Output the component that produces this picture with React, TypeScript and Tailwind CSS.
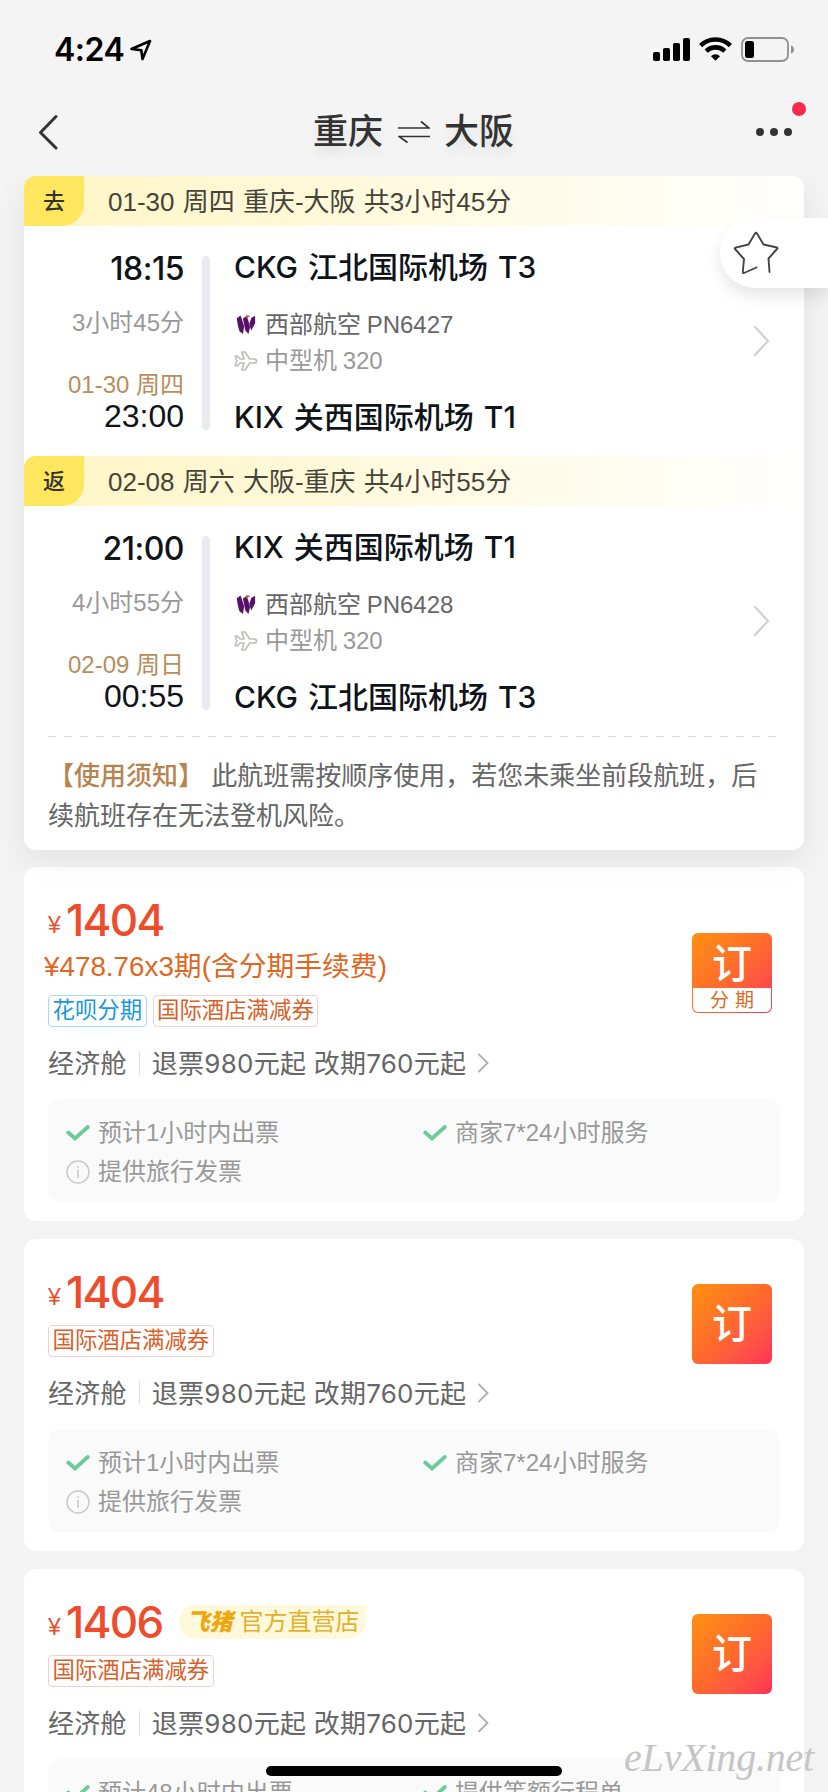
import React from 'react';

interface Leg {
  tag: string;
  summary: string;
  depart: string;
  duration: string;
  arriveDate: string;
  arrive: string;
  from: string;
  to: string;
  flightNo: string;
}

interface Offer {
  price: string;
  installment?: string;
  official?: boolean;
  services: string[];
}

const legs: Leg[] = [
  {
    tag: '去',
    summary: '01-30 周四 重庆-大阪 共3小时45分',
    depart: '18:15',
    duration: '3小时45分',
    arriveDate: '01-30 周四',
    arrive: '23:00',
    from: 'CKG 江北国际机场 T3',
    to: 'KIX 关西国际机场 T1',
    flightNo: '西部航空 PN6427',
  },
  {
    tag: '返',
    summary: '02-08 周六 大阪-重庆 共4小时55分',
    depart: '21:00',
    duration: '4小时55分',
    arriveDate: '02-09 周日',
    arrive: '00:55',
    from: 'KIX 关西国际机场 T1',
    to: 'CKG 江北国际机场 T3',
    flightNo: '西部航空 PN6428',
  },
];

const offers: Offer[] = [
  {
    price: '1404',
    installment: '¥478.76x3期(含分期手续费)',
    services: ['预计1小时内出票', '商家7*24小时服务', '提供旅行发票'],
  },
  {
    price: '1404',
    services: ['预计1小时内出票', '商家7*24小时服务', '提供旅行发票'],
  },
  {
    price: '1406',
    official: true,
    services: ['预计48小时内出票', '提供等额行程单'],
  },
];

const StatusBar = () => (
  <div className="flex h-[88px] items-start justify-between pr-[33px] pl-[54px] text-black">
    <div className="flex items-center pt-[30px]">
      <span className="font-['Inter','Liberation_Sans',sans-serif] text-[32px] leading-[40px] font-semibold tracking-[-0.5px]">
        4:24
      </span>
      <svg className="ml-1.5 size-[22px]" viewBox="0 0 22 22" fill="none">
        <path
          d="M1.5 10 20 2 12.5 20 11.3 11.2Z"
          stroke="currentColor"
          strokeWidth="2.6"
          strokeLinejoin="round"
        />
      </svg>
    </div>
    <div className="flex items-start pt-9">
      <svg className="mt-0.5 h-[23px] w-[37px]" viewBox="0 0 37 23">
        <rect x="0" y="14" width="7" height="9" rx="1.8" />
        <rect x="10" y="10" width="7" height="13" rx="1.8" />
        <rect x="20" y="5" width="7" height="18" rx="1.8" />
        <rect x="30" y="0" width="7" height="23" rx="1.8" />
      </svg>
      <svg
        className="mt-px ml-[9px] h-[24px] w-[33px]"
        viewBox="0 0 33 24"
        fill="none"
        stroke="currentColor"
        strokeWidth="4.6"
      >
        <path d="M1.6 8.6a21.3 21.3 0 0 1 29.8 0" />
        <path d="M7.2 14.2a13.3 13.3 0 0 1 18.6 0" />
        <path
          d="M12 19.2a6.4 6.4 0 0 1 9 0L16.5 23.8Z"
          fill="currentColor"
          stroke="none"
        />
      </svg>
      <svg className="mt-px ml-[9px] h-[25px] w-[54px]" viewBox="0 0 54 25">
        <rect
          x="1"
          y="1"
          width="46"
          height="23"
          rx="6"
          fill="none"
          stroke="#919191"
          strokeWidth="1.8"
        />
        <rect x="4" y="4" width="9" height="17" rx="2.5" />
        <path d="M50 8.500c4 1 4 7 0 8Z" fill="#919191" />
      </svg>
    </div>
  </div>
);

const NavBar = () => (
  <header className="relative flex h-[88px] items-center justify-between pr-9 pl-[38px] text-[#333] [text-shadow:0_8px_10px_rgba(0,0,0,0.08)]">
    <svg className="h-9 w-[21px]" viewBox="0 0 21 36" fill="none">
      <path
        d="M18 2.5 2.5 18.500 18 34"
        stroke="currentColor"
        strokeWidth="3"
        strokeLinecap="round"
        strokeLinejoin="round"
      />
    </svg>
    <h1 className="flex items-center pl-[12px] text-[35px] leading-[50px] font-medium">
      重庆
      <svg
        className="mr-[14px] ml-[15px] h-[24px] w-8"
        viewBox="0 0 32 24"
        fill="none"
        stroke="currentColor"
        strokeWidth="1.7"
      >
        <path d="M0 8h31L23 1.5" />
        <path d="M32 16.500H1l8.500 6" />
      </svg>
      大阪
    </h1>
    <div className="flex gap-1.5">
      <i className="size-2 rounded-full bg-[#333]" />
      <i className="size-2 rounded-full bg-[#333]" />
      <i className="size-2 rounded-full bg-[#333]" />
    </div>
    <i className="absolute top-[14px] right-[22px] size-[14px] rounded-full bg-[#fa2a4f]" />
  </header>
);

const AirlineLogo = () => (
  <svg className="ml-[2px] h-[20px] w-[20px]" viewBox="0 0 20 20">
    <path
      d="M0.800 3.200 4.500.6 6 4.500 8.200 11.500 6.800 19 3.300 16 1.600 9Z"
      fill="#56106a"
    />
    <path
      d="M7 3.400 10.200 1.200 12 4.500 14 12 12.500 19 9.400 15.600 8 9Z"
      fill="#56106a"
    />
    <path d="M15.300 3 19 .8 19.200 8 15.200 15.500 13.300 9Z" fill="#56106a" />
    <path d="M9.400 1.600c1.500-2 3.400-1.800 4.800.2-1.600-.2-2.400.4-3 1.600Z" fill="#e0453a" />
  </svg>
);

const PlaneIcon = () => (
  <svg
    className="h-[20px] w-[24px]"
    viewBox="0 0 24 20"
    fill="none"
    stroke="#bcc0ba"
    strokeWidth="1.7"
    strokeLinejoin="round"
  >
    <path d="M1.300 5.200h2.200L6 8h4L7.800 1H11l4.800 7h4.700c2.900.4 2.900 3.600 0 4h-4.700L11 19H7.800L10 12H6l-2.500 2.800H1.300L2.800 10Z" />
  </svg>
);

const FlightLeg = ({ leg }: { leg: Leg }) => (
  <section>
    <div className="flex h-[50px] items-center rounded-tl-[12px] rounded-tr-[12px] bg-linear-to-r from-[#fff5c4] via-[#fffbe6] via-60% to-white">
      <span className="flex h-[50px] w-[60px] items-center justify-center rounded-tl-[12px] rounded-br-[22px] bg-[#fee75e] pt-px text-[22px] font-medium text-[#333]">
        {leg.tag}
      </span>
      <span className="ml-6 pt-[2px] text-[26px] [word-spacing:1px] text-[#464439]">
        {leg.summary}
      </span>
    </div>
    <div className="flex h-[230px] items-center pt-[4px]">
      <div className="flex h-[174px] w-[160px] flex-col items-end *:shrink-0">
        <span className="mt-[-7px] font-['Inter','Liberation_Sans',sans-serif] text-[32px] leading-[40px] font-medium tracking-[-0.5px] text-[#0f131a]">
          {leg.depart}
        </span>
        <span className="mt-[19px] text-2xl leading-[30px] text-[#999]">
          {leg.duration}
        </span>
        <span className="mt-[32px] text-2xl leading-[30px] text-[#b98d5c]">
          {leg.arriveDate}
        </span>
        <span className="text-[32px] leading-[32px] text-[#0f131a]">
          {leg.arrive}
        </span>
      </div>
      <div className="ml-[18px] h-[174px] w-2 rounded-full bg-[#e9eaf0]" />
      <div className="ml-6 flex h-[174px] flex-1 flex-col *:shrink-0">
        <span className="mt-[-9px] font-['Inter','Noto_Sans_CJK_SC',sans-serif] text-[30px] leading-[40px] font-medium [word-spacing:2px] text-[#0f131a]">
          {leg.from}
        </span>
        <div className="mt-[20px] flex h-9 items-center text-2xl [word-spacing:-1px] text-[#666]">
          <span className="w-[31px]">
            <AirlineLogo />
          </span>
          {leg.flightNo}
        </div>
        <div className="flex h-9 items-center text-2xl [word-spacing:-1px] text-[#999]">
          <span className="w-[31px]">
            <PlaneIcon />
          </span>
          中型机 320
        </div>
        <span className="mt-[18px] font-['Inter','Noto_Sans_CJK_SC',sans-serif] text-[30px] leading-[40px] font-medium [word-spacing:2px] text-[#0f131a]">
          {leg.to}
        </span>
      </div>
      <svg
        className="mt-[-4px] mr-[34px] h-8 w-[17px]"
        viewBox="0 0 17 32"
        fill="none"
      >
        <path
          d="M2 2 15 16 2 30"
          stroke="#d0d0d0"
          strokeWidth="2.2"
          strokeLinecap="round"
        />
      </svg>
    </div>
  </section>
);

const CheckIcon = () => (
  <svg className="h-4 w-[24px]" viewBox="0 0 24 16" fill="none">
    <path
      d="M2.2 7.500 9 13.500 21.800 2"
      stroke="#6bcb9a"
      strokeWidth="3.8"
      strokeLinecap="round"
    />
  </svg>
);

const InfoIcon = () => (
  <svg className="size-6" viewBox="0 0 24 24" fill="none" stroke="#c9cacb">
    <circle cx="12" cy="12" r="11" strokeWidth="1.5" />
    <path d="M12 10v8" strokeWidth="1.6" />
    <circle cx="12" cy="7" r="1" fill="#c9cacb" stroke="none" />
  </svg>
);

const BookButton = ({ installment }: { installment: boolean }) => (
  <button
    type="button"
    className="flex size-20 flex-col overflow-hidden rounded-[6px] bg-linear-135 from-[#ff900a] via-[#ff6a2b] to-[#ff3056]"
  >
    <span
      className={`flex w-full flex-1 items-center justify-center text-[40px] leading-none font-medium text-white ${
        installment ? 'pt-1.5' : ''
      }`}
    >
      订
    </span>
    {installment && (
      <span className="mx-px mb-px flex h-6 w-[78px] items-center justify-center gap-[6px] rounded-b-[5px] bg-white pt-px text-[19px] leading-none text-[#e0671f]">
        <b className="font-normal">分</b>
        <b className="font-normal">期</b>
      </span>
    )}
  </button>
);

const OfferCard = ({ offer }: { offer: Offer }) => (
  <article className="rounded-[12px] bg-white px-6 pt-[28px] pb-[19px]">
    <div className="flex justify-between">
      <div>
        <div className="flex h-[50px] items-center">
          <div className="flex items-baseline font-['Inter','Liberation_Sans',sans-serif] text-[#ee4d2d]">
            <span className="w-[14px] -translate-y-[3px] font-['Liberation_Sans',sans-serif] text-[23px]">
              ¥
            </span>
            <span className="ml-[4px] text-[44px] leading-[50px] font-medium tracking-[-1.7px]">
              {offer.price}
            </span>
          </div>
          {offer.official && (
            <div className="ml-[17px] flex h-[34px] items-center rounded-l-[16px] rounded-br-[18px] bg-[#fff9dc] px-[7px] text-2xl text-[#e3b02e]">
              <em className="mr-[7px] text-[23px] font-black text-[#efa50c]">
                飞猪
              </em>
              官方直营店
            </div>
          )}
        </div>
        {offer.installment && (
          <p className="mt-[2px] ml-[-4px] h-10 text-[27.8px] leading-10 text-[#e0671f]">
            {offer.installment}
          </p>
        )}
        <div className="mt-2 flex h-8 gap-1.5 text-[22.4px] leading-[29px]">
          {offer.installment && (
            <span className="rounded-[4px] border border-[#a9d8f5] px-[3.5px] text-[#1a97dc]">
              花呗分期
            </span>
          )}
          <span className="rounded-[4px] border border-[#f3cfd2] px-[3.5px] text-[#d9602a]">
            国际酒店满减券
          </span>
        </div>
      </div>
      <div
        className={
          offer.installment ? 'mt-[38px] mr-2' : 'mt-[17px] mr-2 mb-[-10px]'
        }
      >
        <BookButton installment={!!offer.installment} />
      </div>
    </div>
    <div className="mt-4 flex h-10 items-center font-['Inter','Noto_Sans_CJK_SC',sans-serif] text-[26px] tracking-[0.25px] text-[#666]">
      经济舱
      <i className="mx-[12px] h-6 w-px bg-[#ddd]" />
      退票980元起 改期760元起
      <svg className="ml-[11px] h-5 w-[12px]" viewBox="0 0 12 20" fill="none">
        <path d="M1.5 1 10.500 10l-9 9" stroke="#b0b0b0" strokeWidth="1.9" />
      </svg>
    </div>
    <ul className="mt-4 grid h-[103px] grid-cols-[357px_1fr] content-start rounded-[12px] bg-[#fafafa] pt-[14px] pl-[18px] text-2xl text-[#999]">
      {offer.services.map((service, i) => (
        <li key={service} className="flex h-[39px] items-center gap-2">
          {i < 2 ? <CheckIcon /> : <InfoIcon />}
          {service}
        </li>
      ))}
    </ul>
  </article>
);

const App: React.FC = () => {
  return (
    <div
      lang="zh-CN"
      className="relative h-[1792px] w-[828px] overflow-hidden bg-[#f3f3f3] font-['Liberation_Sans','Noto_Sans_CJK_SC',sans-serif]"
    >
      <div className="relative z-20 bg-[#f4f4f4]">
        <StatusBar />
        <NavBar />
      </div>

      <main className="px-6">
        <div className="relative z-10 h-[674px] rounded-[12px] bg-white shadow-[0_10px_30px_rgba(0,0,0,0.07)]">
          {legs.map((leg) => (
            <FlightLeg key={leg.flightNo} leg={leg} />
          ))}
          <svg className="mx-6 h-[2px] w-[732px]" viewBox="0 0 732 2">
            <path
              d="M0 .5h732"
              stroke="#dadada"
              strokeWidth="1"
              strokeDasharray="8 8"
            />
          </svg>
          <p className="mt-[18px] px-6 text-[26px] leading-10 text-[#666]">
            <span className="font-medium text-[#b98350]">【使用须知】</span>{' '}
            此航班需按顺序使用，若您未乘坐前段航班，后
            <br />
            续航班存在无法登机风险。
          </p>
        </div>
        <div className="mt-[17px] flex flex-col gap-[18px]">
          {offers.map((offer, i) => (
            <OfferCard key={i} offer={offer} />
          ))}
        </div>
      </main>

      {/* 收藏 */}
      <button
        type="button"
        className="absolute top-[218px] right-0 z-30 flex h-[70px] w-[108px] items-center rounded-l-[35px] bg-white pl-[13px] shadow-[0_8px_16px_rgba(0,0,0,0.1)]"
      >
        <svg
          className="h-[44px] w-[46px]"
          viewBox="0 0 46 44"
          fill="none"
          stroke="#444"
          strokeWidth="1.9"
          strokeLinecap="round"
          strokeLinejoin="round"
        >
          <path d="M23.500 36.500 11 42Q9.800 42.500 9.800 41L11 28 2 18Q1.300 17 2.500 16.700L15.500 13.500 22 2.500Q23 1 24 2.500L30.500 13.500 44 16.500Q45 17 44 18L35.500 27.500 36.500 41" />
        </svg>
      </button>

      <div className="absolute right-[14px] bottom-[10px] z-30 font-['Liberation_Serif',serif] text-[40px] leading-[48px] tracking-[-0.2px] text-[#c5c5c5] italic">
        eLvXing.net
      </div>
      <div className="absolute bottom-4 left-[266px] z-40 h-[10px] w-[296px] rounded-full bg-black" />
    </div>
  );
};

export default App;
